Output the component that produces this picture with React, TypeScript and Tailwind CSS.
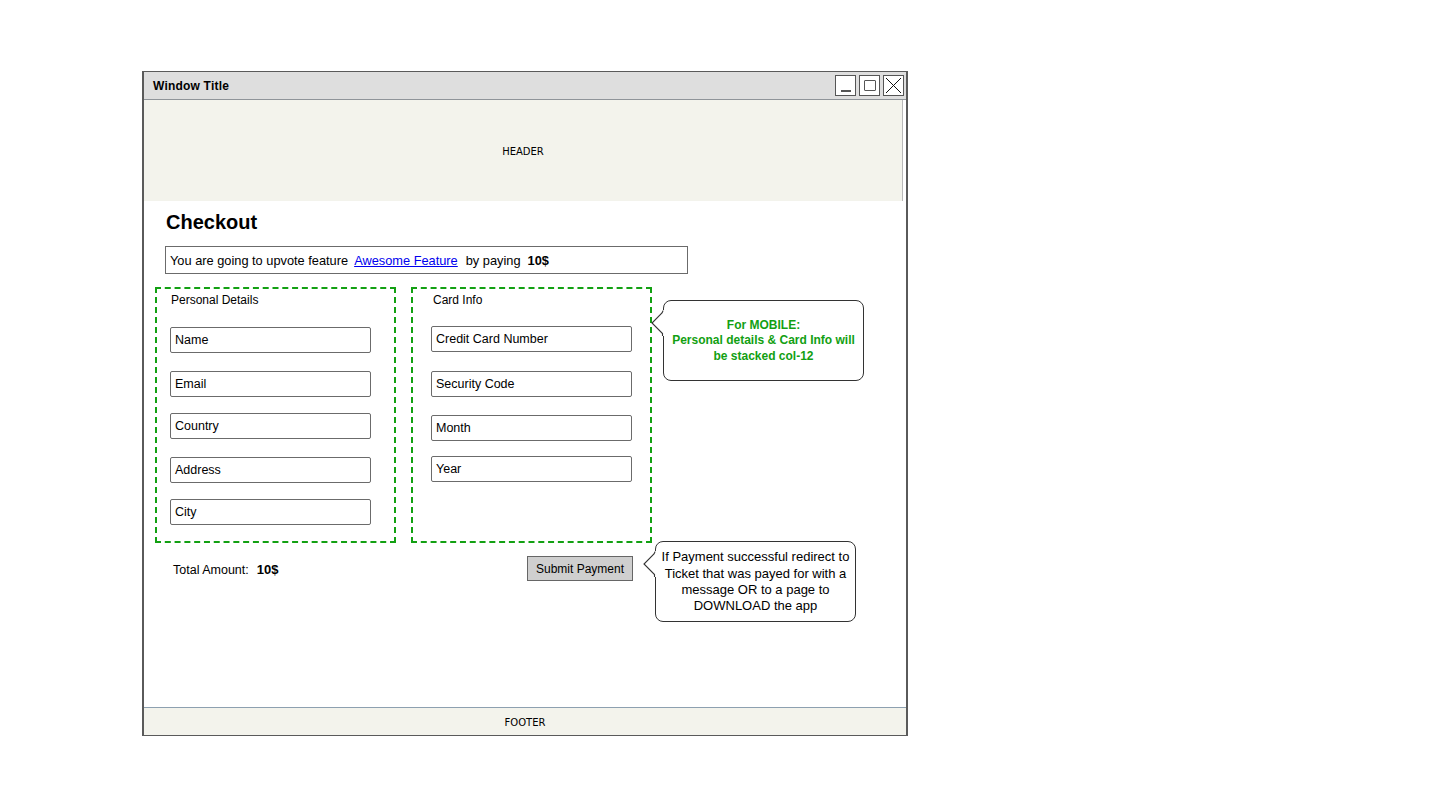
import React from 'react';

const hand = "font-['Liberation_Sans',Arial,sans-serif]";

const personal = [
  { label: 'Name', gap: 'mt-[19px]' },
  { label: 'Email', gap: 'mt-[18px]' },
  { label: 'Country', gap: 'mt-[16px]' },
  { label: 'Address', gap: 'mt-[18px]' },
  { label: 'City', gap: 'mt-[16px]' },
];

const card = [
  { label: 'Credit Card Number', gap: 'mt-[18px]' },
  { label: 'Security Code', gap: 'mt-[19px]' },
  { label: 'Month', gap: 'mt-[18px]' },
  { label: 'Year', gap: 'mt-[15px]' },
];

const Field = ({ label, gap }: { label: string; gap: string }) => (
  <div
    className={`${gap} h-[26px] w-[201px] border-[1.5px] border-[#6b6b6b] rounded-[2px] bg-white pl-[4px] pt-[1px] flex items-center text-[12.5px] text-black`}
  >
    {label}
  </div>
);

const Tail = ({ className }: { className: string }) => (
  <svg className={`absolute ${className}`} width="14" height="26" viewBox="0 0 14 26">
    <path d="M12 0 L12 26 L13 26 L13 0 Z" fill="white" />
    <path d="M12 0.5 C12 1, 11.5 2, 11 3 L1 13 L11.5 23.5 L11.5 26" fill="white" stroke="#333" strokeWidth="1.1" />
  </svg>
);

const WinButton = ({ children }: { children: React.ReactNode }) => (
  <div className="w-[21px] h-[21px] border-[1.5px] border-[#555] bg-white flex items-center justify-center">
    {children}
  </div>
);

const App = () => {
  return (
    <div className={`w-[1440px] h-[804px] bg-white pl-[142px] pt-[71px] ${hand}`}>
      <div className="w-[766px] h-[665px] border border-[#5a5a5a] border-l-2 border-r-2 flex flex-col">
        {/* title bar */}
        <div className="h-[28px] bg-[#dedede] border-b border-[#8f9499] flex items-center justify-between pl-[9px] pr-[2px]">
          <span className="pt-[1px] text-[12px] font-bold text-black tracking-[0.2px]">Window Title</span>
          <div className="flex gap-[3px]">
            <WinButton>
              <div className="w-[10px] h-[2px] bg-[#555] mt-[10px]" />
            </WinButton>
            <WinButton>
              <div className="w-[12px] h-[11px] border-[1.5px] border-[#555] rounded-[1px]" />
            </WinButton>
            <WinButton>
              <svg width="17" height="17" viewBox="0 0 17 17">
                <path d="M1 1 L16 16 M16 1 L1 16" stroke="#111" strokeWidth="1" />
              </svg>
            </WinButton>
          </div>
        </div>

        {/* header */}
        <div className="h-[101px] mr-[3px] pt-[2px] bg-[#f3f3ec] border-r border-[#b9b9b9] flex items-center justify-center">
          <span className="font-['DejaVu_Sans',sans-serif] text-[10px] text-black">HEADER</span>
        </div>

        {/* content */}
        <div className="flex-1 pl-[11px]">
          <h1 className="ml-[11px] mt-[10px] text-[20px] leading-[23px] font-bold text-black font-['Liberation_Sans',Arial,sans-serif]">
            Checkout
          </h1>

          <div className="ml-[10px] mt-[12px] w-[523px] h-[28px] border-[1.5px] border-[#6b6b6b] flex items-center pl-[4px] pt-[1px] text-[12.8px] text-black">
            <span>You are going to upvote feature</span>
            <a href="#" className="ml-[6px] text-[#0000ee] underline">
              Awesome Feature
            </a>
            <span className="ml-[8px]">by paying</span>
            <span className="ml-[7px] font-bold">10$</span>
          </div>

          <div className="mt-[13px] flex items-start">
            <div className="w-[241px] h-[256px] border-2 border-dashed border-[#12a012] pl-[13px] pt-[3px]">
              <div className="pl-[1px] h-[16px] text-[12px] leading-[16px] text-black">Personal Details</div>
              {personal.map((f) => (
                <Field key={f.label} label={f.label} gap={f.gap} />
              ))}
            </div>

            <div className="ml-[15px] w-[241px] h-[256px] border-2 border-dashed border-[#12a012] pl-[18px] pt-[3px]">
              <div className="pl-[2px] h-[16px] text-[12px] leading-[16px] text-black">Card Info</div>
              {card.map((f) => (
                <Field key={f.label} label={f.label} gap={f.gap} />
              ))}
            </div>

            <div className="relative ml-[11px] mt-[13px] w-[201px] h-[81px] border border-[#333] rounded-[8px] bg-white flex items-center justify-center text-center text-[12px] leading-[15.5px] font-bold text-[#12a012]">
              <Tail className="left-[-13px] top-[9px]" />
              <div className="pt-[1px]">
                For MOBILE:
                <br />
                Personal details &amp; Card Info will
                <br />
                be stacked col-12
              </div>
            </div>
          </div>

          <div className="mt-[-2px] flex items-start">
            <div className="ml-[18px] mt-[21px] w-[354px] text-[12.5px] leading-[16px] text-black">
              Total Amount:<span className="ml-[8px] font-bold text-[13px]">10$</span>
            </div>
            <button className="mt-[15px] w-[106px] h-[25px] bg-[#cfcfcf] border-[1.5px] border-[#666] text-[12px] text-black">
              Submit Payment
            </button>
            <div className="relative ml-[22px] w-[201px] h-[81px] border border-[#333] rounded-[8px] bg-white flex items-center justify-center text-center text-[13px] leading-[16.4px] text-black">
              <Tail className="left-[-13px] top-[9px]" />
              <div className="pt-[1px]">
                If Payment successful redirect to
                <br />
                Ticket that was payed for with a
                <br />
                message OR to a page to
                <br />
                DOWNLOAD the app
              </div>
            </div>
          </div>
        </div>

        {/* footer */}
        <div className="h-[28px] pt-[2px] bg-[#f3f3ec] border-t border-[#8da0b0] flex items-center justify-center">
          <span className="font-['DejaVu_Sans',sans-serif] text-[10px] text-black">FOOTER</span>
        </div>
      </div>
    </div>
  );
};

export default App;
